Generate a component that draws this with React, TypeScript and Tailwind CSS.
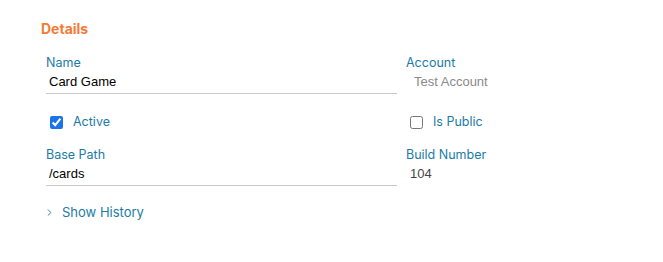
import { ChevronRight } from "lucide-react";

const label = "block text-[12.5px] leading-[16px] text-[#1b7ba6] [font-family:Inter,sans-serif]";
const value = "block text-[13px] leading-[16px] [font-family:'Liberation_Sans',Arial,sans-serif]";

export default function App() {
  return (
    <div className="w-[663px] h-[262px] bg-white pt-[20px] pl-[41px]">
      <h2 className="text-[14px] leading-[18px] font-bold text-[#f47a36] [font-family:Inter,sans-serif]">
        Details
      </h2>

      <div className="grid grid-cols-[351px_1fr] gap-x-[9px] pl-[5px] mt-[17px]">
        <Field label="Name" val="Card Game" underline />
        <Field label="Account" val="Test Account" muted />

        <Check label="Active" checked />
        <Check label="Is Public" />

        <Field label="Base Path" val="/cards" underline />
        <Field label="Build Number" val="104" plain />
      </div>

      <button className="flex items-center gap-[7px] mt-[18px] pl-[3px] leading-[16px] text-[#1b7ba6]">
        <ChevronRight size={11} strokeWidth={2} />
        <span className="text-[13px] leading-[16px] [font-family:Inter,sans-serif]">Show History</span>
      </button>
    </div>
  );
}

function Field({
  label: l,
  val,
  underline,
  muted,
  plain,
}: {
  label: string;
  val: string;
  underline?: boolean;
  muted?: boolean;
  plain?: boolean;
}) {
  return (
    <div className="flex flex-col">
      <span className={label}>{l}</span>
      <div
        className={`mt-[3px] pb-[3px] ${underline ? "border-b border-[#c8c8c8] pl-[3px]" : muted ? "pl-[8px]" : "pl-[4px]"}`}
      >
        <span className={`${value} ${muted ? "text-[#8a8a8a]" : plain ? "text-[#444]" : "text-black"}`}>{val}</span>
      </div>
    </div>
  );
}

function Check({ label: l, checked }: { label: string; checked?: boolean }) {
  return (
    <label className="flex items-center gap-[10px] mt-[20px] mb-[17px] leading-[16px] pl-[4px]">
      <input
        type="checkbox"
        defaultChecked={checked}
        className="w-[13px] h-[13px] m-0 accent-[#1a73e8]"
      />
      <span className={label}>{l}</span>
    </label>
  );
}
